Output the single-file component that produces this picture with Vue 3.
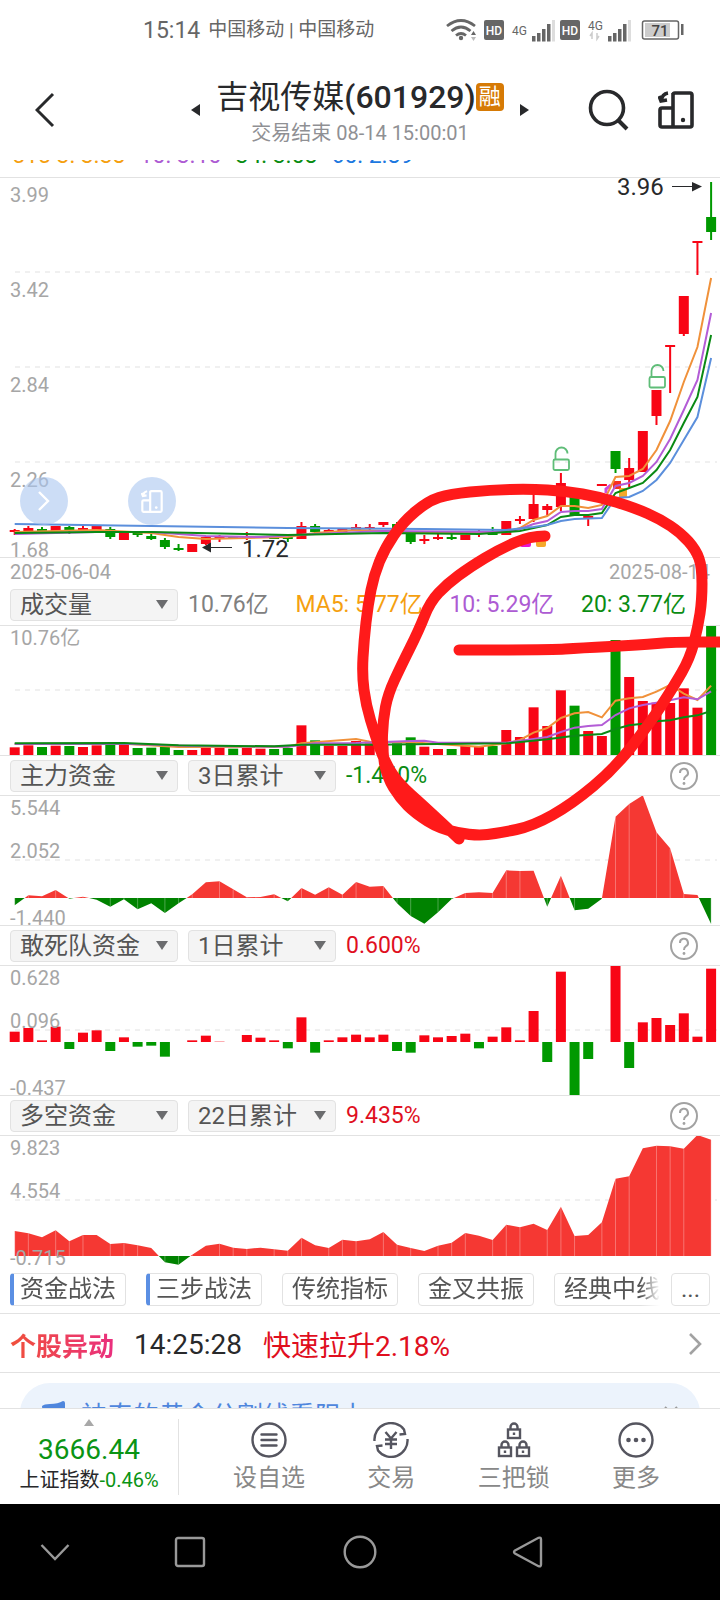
<template>
    <div class="stock-page">
        <div class="status-bar">
            <span class="clock">15:14</span>
            <span class="carrier">中国移动 | 中国移动</span>
            <svg class="status-icons" width="250" height="40" viewBox="440 10 250 40">
                <g fill="none" stroke="#666" stroke-width="2.8">
                    <path d="M447 26 Q461 15 475 26" />
                    <path d="M451.500 31 Q461 23 470.500 31" />
                    <path d="M456 35.500 Q461 31.500 466 35.500" />
                </g>
                <circle cx="461" cy="38" r="2.200" fill="#666" />
                <path d="M471 35 l2.500 -4 l2.500 4 z" fill="#666" />
                <path d="M471 37 l2.500 4 l2.500 -4 z" fill="#bbb" />
                <rect x="484" y="20" width="20" height="20" rx="2" fill="#666" />
                <text x="494" y="35" class="hd">HD</text>
                <text x="512" y="35" class="net">4G</text>
                <rect x="560" y="20" width="20" height="20" rx="2" fill="#666" />
                <text x="570" y="35" class="hd">HD</text>
                <text x="588" y="30" class="net">4G</text>
                <path d="M592 39 v-6 l-2 3 M597 33 v6 l2 -3" fill="none" stroke="#ccc" stroke-width="1.500" />
                <g v-for="x in [532, 608]" :key="x" fill="#666">
                    <rect :x="x" y="36" width="3.500" height="5.500" />
                    <rect :x="x + 5" y="33" width="3.500" height="8.500" />
                    <rect :x="x + 10" y="29" width="3.500" height="12.500" />
                    <rect :x="x + 15" y="24" width="3.500" height="17.500" />
                    <rect :x="x + 20" y="20" width="3" height="21.500" fill="#ddd" />
                </g>
                <rect x="642.500" y="21" width="36" height="18" rx="2" fill="#fff" stroke="#666" stroke-width="1.500" />
                <rect x="645" y="23" width="25" height="14" fill="#ccc" />
                <rect x="681" y="24" width="2.500" height="11" fill="#666" />
                <text x="660" y="35.500" class="level">71</text>
            </svg>
        </div>

        <header class="top-bar">
            <button class="plain back" aria-label="返回">
                <svg width="20" height="36" viewBox="0 0 20 36"><path d="M18 2 L2 18 L18 34" fill="none" stroke="#28292b" stroke-width="3" /></svg>
            </button>
            <div class="title-group">
                <button class="plain" aria-label="上一只">
                    <svg width="9" height="12" viewBox="0 0 9 12"><path d="M9 0 V12 L0 6 z" fill="#28292b" /></svg>
                </button>
                <div class="title-box">
                    <h1>吉视传媒<b>(601929)</b><span class="badge">融</span></h1>
                    <p>交易结束 08-14 15:00:01</p>
                </div>
                <button class="plain" aria-label="下一只">
                    <svg width="9" height="12" viewBox="0 0 9 12"><path d="M0 0 V12 L9 6 z" fill="#28292b" /></svg>
                </button>
            </div>
            <div class="actions">
                <button class="plain" aria-label="搜索">
                    <svg width="42" height="42" viewBox="0 0 42 42" fill="none" stroke="#28292b" stroke-width="3.600">
                        <circle cx="19" cy="19" r="16.500" /><path d="M30 31 L39 40" stroke-width="4" />
                    </svg>
                </button>
                <button class="plain" aria-label="横屏">
                    <svg width="36" height="38" viewBox="0 0 36 38" fill="none" stroke="#28292b" stroke-width="3.600">
                        <path :d="devicePath" /><circle cx="25" cy="29" r="2.200" fill="#28292b" stroke="none" />
                    </svg>
                </button>
            </div>
        </header>

        <div class="ma-strip">
            <span class="c-orange">515 3: 3.38</span>
            <span class="c-purple">10: 3.10</span>
            <span class="c-green">34: 3.08</span>
            <span class="c-blue">60: 2.89</span>
        </div>

        <section class="chart price-chart">
            <svg viewBox="0 178 720 379">
                <path class="grid" d="M15 272H717M15 367H717M15 462H717" />
                <text x="10" y="202" class="axis">3.99</text>
                <text x="10" y="297" class="axis">3.42</text>
                <text x="10" y="392" class="axis">2.84</text>
                <text x="10" y="487" class="axis">2.26</text>
                <text x="10" y="557" class="axis">1.68</text>
                <g v-for="(c, i) in candles" :key="i" :fill="color(i)">
                    <rect :x="cx(i) - 1" :y="c[0]" width="2" :height="c[3] - c[0]" />
                    <rect :x="cx(i) - 5" :y="c[1]" width="10" :height="c[2] - c[1]" />
                </g>
                <rect x="520" y="540" width="11" height="7" rx="2" fill="#e815d0" />
                <rect x="536" y="540" width="10" height="7" rx="2" fill="#f5a82a" />
                <path d="M606 493 V489 L611 485" fill="none" stroke="#cf4be0" stroke-width="3" />
                <rect x="613" y="481" width="8" height="8" fill="#f8301f" />
                <rect x="619" y="488" width="8" height="10" rx="2" fill="#f5a82a" />
                <polyline v-for="l in priceLines" :key="l.color" class="ma" :points="points(l.data, v => v)" :stroke="l.color" />
                <g fill="none" stroke="#5fbd78" stroke-width="1.800">
                    <g v-for="p in locks" :key="p" :transform="p">
                        <rect x="0" y="12" width="15.500" height="10.500" rx="1.500" />
                        <path d="M2 12 V6 A6 6 0 0 1 14 6" />
                    </g>
                </g>
                <text x="617" y="195" class="peak">3.96</text>
                <path d="M672 186.500H694" stroke="#28292b" />
                <path d="M692 182 V191.500 L702 186.500 z" fill="#28292b" />
                <text x="242" y="557" class="peak">1.72</text>
                <path d="M211 547.500H232" stroke="#28292b" />
                <path d="M211 542.500 V552.500 L202 547.500 z" fill="#28292b" />
            </svg>
            <div class="floaters">
                <button class="plain float-btn" aria-label="展开">
                    <svg width="14" height="22" viewBox="0 0 14 22"><path d="M2 2 L11 11 L2 20" fill="none" stroke="#fff" stroke-width="2.400" /></svg>
                </button>
                <button class="plain float-btn" aria-label="切换横屏">
                    <svg width="22" height="23" viewBox="0 0 36 38" fill="none" stroke="#fff" stroke-width="3.600">
                        <path :d="devicePath" /><circle cx="25" cy="29" r="2.200" fill="#fff" stroke="none" />
                    </svg>
                </button>
            </div>
        </section>

        <div class="dates">
            <span>2025-06-04</span>
            <span>2025-08-14</span>
        </div>

        <div class="panel-head first">
            <label class="picker wide"><select aria-label="成交量指标"><option>成交量</option></select></label>
            <div class="values">
                <span class="value c-grey">10.76亿</span>
                <span class="value c-orange">MA5: 5.77亿</span>
                <span class="value c-purple">10: 5.29亿</span>
                <span class="value c-green">20: 3.77亿</span>
            </div>
        </div>
        <section class="chart">
            <svg viewBox="0 626 720 129">
                <path class="grid" d="M15 690H717" />
                <text x="10" y="645" class="axis">10.76亿</text>
                <rect v-for="(v, i) in volumes" :key="i" :x="cx(i) - 5" :y="755 - v / 3" width="10" :height="v / 3" :fill="color(i)" />
                <polyline v-for="l in volumeLines" :key="l.color" class="ma" :points="points(l.data, v => 755 - v / 3)" :stroke="l.color" />
            </svg>
        </section>

        <template v-for="p in panels" :key="p.name">
            <div class="panel-head">
                <label class="picker wide"><select :aria-label="p.name + '指标'"><option>{{ p.name }}</option></select></label>
                <label class="picker"><select :aria-label="p.name + '周期'"><option>{{ p.period }}</option></select></label>
                <span class="value" :class="p.tone">{{ p.value }}</span>
                <button class="plain help" :aria-label="p.name + '说明'">
                    <svg width="28" height="28" viewBox="0 0 28 28" fill="none" stroke="#a2a2a2" stroke-width="2">
                        <circle cx="14" cy="14" r="13" />
                        <path d="M10 11 A4 4 0 1 1 16 14.200 Q14 15.500 14 18" /><circle cx="14" cy="21.500" r="1.400" fill="#a2a2a2" stroke="none" />
                    </svg>
                </button>
            </div>
            <section class="chart">
                <svg :viewBox="`0 ${p.top} 720 129`">
                    <path class="grid" :d="`M15 ${p.top + 64}H717`" />
                    <template v-if="p.kind === 'area'">
                        <clipPath :id="'up' + p.top"><rect x="0" :y="p.top" width="720" :height="p.zero - p.top" /></clipPath>
                        <clipPath :id="'down' + p.top"><rect x="0" :y="p.zero" width="720" height="60" /></clipPath>
                        <polygon :points="area(p)" fill="#f53833" :clip-path="`url(#up${p.top})`" />
                        <polygon :points="area(p)" fill="#008200" :clip-path="`url(#down${p.top})`" />
                        <template v-for="(v, i) in p.data" :key="i">
                            <path v-if="i % 4 !== 2" :d="`M${cx(i)} ${p.zero}V${p.zero - v / 3}`" stroke="#fff" stroke-opacity=".3" />
                        </template>
                    </template>
                    <template v-else>
                        <rect v-for="(v, i) in p.data" :key="i" :x="cx(i) - 5" :y="v > 0 ? p.zero - v / 3 : p.zero" width="10" :height="Math.abs(v) / 3" :fill="v > 0 ? '#f80515' : '#009900'" />
                    </template>
                    <text x="10" :y="p.top + 19" class="axis">{{ p.labels[0] }}</text>
                    <text x="10" :y="p.top + 62" class="axis">{{ p.labels[1] }}</text>
                    <text x="10" :y="p.top + 129" class="axis">{{ p.labels[2] }}</text>
                </svg>
            </section>
        </template>

        <div class="chips-row">
            <div class="chips">
                <button v-for="(c, i) in chips" :key="c" class="chip" :class="{ marked: i < 2 }">{{ c }}</button>
            </div>
            <button class="chip more">...</button>
        </div>

        <a class="news" href="#">
            <strong>个股异动</strong>
            <time>14:25:28</time>
            <span>快速拉升2.18%</span>
            <svg width="14" height="24" viewBox="0 0 14 24"><path d="M2 2 L12 12 L2 22" fill="none" stroke="#a2a2a2" stroke-width="2.600" /></svg>
        </a>

        <div class="promo-wrap">
            <div class="promo">
                <svg width="24" height="24" viewBox="0 0 24 24"><path d="M0 5 Q2 3 8 3 Q16 3 21 0 Q23 0 23 2 V20 L1 15 z" fill="#4f86dd" /></svg>
                <span>神奇的黄金分割线看阻力</span>
                <svg class="close" width="14" height="14" viewBox="0 0 14 14"><path d="M1 1 L13 13 M13 1 L1 13" stroke="#999" stroke-width="2" /></svg>
            </div>
        </div>

        <nav class="bottom-nav">
            <a class="index" href="#">
                <svg width="10" height="7" viewBox="0 0 10 7"><path d="M5 0 L10 7 H0 z" fill="#a8a8a8" /></svg>
                <span class="index-value">3666.44</span>
                <span class="index-name">上证指数<i>-0.46%</i></span>
            </a>
            <div class="tabs">
                <a href="#">
                    <svg viewBox="0 0 36 36"><circle cx="18" cy="18" r="16.500" /><path d="M10.500 12.500H25.500M10.500 18H25.500M10.500 23.500H25.500" stroke-linecap="round" /></svg>
                    设自选
                </a>
                <a href="#">
                    <svg viewBox="0 0 36 36">
                        <path d="M1.500 19 A16.500 16.500 0 0 1 31 7.500 L32 12 L26.500 12.500" />
                        <path d="M34.500 17 A16.500 16.500 0 0 1 5 28.500 L4 24 L9.500 23.500" />
                        <path d="M12.500 10 L18 16.500 L23.500 10 M18 16 V27 M12 17.500H24 M12 22H24" />
                    </svg>
                    交易
                </a>
                <a href="#">
                    <svg viewBox="0 0 36 36">
                        <g v-for="p in ['translate(12 1)', 'translate(3 19)', 'translate(21 19)']" :key="p" :transform="p">
                            <rect x="0" y="6.500" width="12" height="8.500" /><path d="M2.500 6.500 V4 A3.500 3.500 0 0 1 9.500 4 V6.500 M6 9.500 V12" />
                        </g>
                    </svg>
                    三把锁
                </a>
                <a href="#">
                    <svg viewBox="0 0 36 36">
                        <circle cx="18" cy="18" r="16.500" />
                        <g fill="#55555f" stroke="none"><circle cx="10.500" cy="18" r="2.300" /><circle cx="18" cy="18" r="2.300" /><circle cx="25.500" cy="18" r="2.300" /></g>
                    </svg>
                    更多
                </a>
            </div>
        </nav>

        <div class="system-bar">
            <button class="plain" aria-label="收起"><svg width="32" height="32" viewBox="0 0 32 32"><path d="M2.500 9 L16 23 L29.500 9" /></svg></button>
            <button class="plain" aria-label="最近任务"><svg width="32" height="32" viewBox="0 0 32 32"><rect x="2" y="2" width="28" height="28" rx="2" /></svg></button>
            <button class="plain" aria-label="主屏幕"><svg width="34" height="34" viewBox="0 0 34 34"><circle cx="17" cy="17" r="15.300" /></svg></button>
            <button class="plain" aria-label="后退"><svg width="32" height="32" viewBox="0 0 32 32"><path d="M3 14.500 L26.500 1.800 Q29 1 29 3.500 V28.500 Q29 31 26.500 30.200 L3 17.500 Q1 16 3 14.500 z" /></svg></button>
        </div>

        <svg class="marker" viewBox="0 0 720 1600">
            <path v-for="(s, i) in strokes" :key="i" :d="smooth(s)" />
        </svg>
    </div>
</template>

<script setup>
const devicePath = 'M15 4 Q15 2 17 2 H32 Q34 2 34 4 V34 Q34 36 32 36 H4 Q2 36 2 34 V19 Q2 17 4 17 H15 M15 2 V36 M10 2 Q4 3 3 10 M1 5 L3 10 L9 9'

const directions = 'RRGRGRRGRGGGGRRRGRRGGRGRRRRRGGRRGRRGRRRRRGRRGRRRRRRG'
const color = i => (directions[i] === 'R' ? '#f80515' : '#009900')

// horizontal centre of a trading day
const cx = i => 14.7 + i * 13.655

// high, body top, body bottom, low
const candles = [
    [529, 530, 532, 535], [526, 528, 532, 532], [527, 529, 531, 532], [526, 526, 531, 531],
    [526, 527, 531, 534], [526, 528, 530, 530], [525, 526, 530, 530], [527, 529, 537, 539],
    [533, 533, 540, 540], [533, 533, 535, 537], [534, 536, 539, 540], [538, 540, 547, 549],
    [544, 548, 550, 551], [544, 544, 552, 552], [537, 537, 544, 545], [535, 537, 539, 542],
    [536, 536, 538, 538], [532, 536, 538, 540], [536, 536, 538, 538], [537, 537, 539, 539],
    [537, 537, 539, 542], [522, 526, 539, 539], [524, 526, 532, 533], [529, 530, 532, 532],
    [529, 529, 532, 532], [524, 527, 530, 530], [524, 527, 528, 530], [522, 522, 525, 527],
    [522, 524, 529, 529], [532, 532, 542, 544], [535, 539, 541, 544], [534, 537, 539, 540],
    [534, 537, 539, 540], [535, 535, 540, 540], [530, 531, 533, 537], [527, 533, 535, 535],
    [521, 521, 535, 535], [516, 519, 521, 524], [494, 504, 519, 522], [504, 506, 510, 515],
    [473, 483, 507, 511], [497, 497, 516, 516], [514, 516, 518, 526], [484, 484, 486, 486],
    [451, 451, 469, 473], [458, 468, 480, 487], [431, 431, 472, 472], [390, 390, 416, 425],
    [345, 345, 347, 393], [296, 296, 334, 336], [241, 241, 243, 275], [182, 217, 232, 240]
]

// [day, position] pairs
const priceLines = [
    { color: '#f0913a', data: [[0, 532], [6, 530], [10, 533], [12, 537], [14, 539], [20, 537], [22, 533], [25, 530], [31, 533], [36, 532], [37, 528], [38, 520], [39, 516], [40, 506], [41, 506], [42, 508], [43, 505], [44, 477], [45, 476], [46, 469], [47, 450], [48, 421], [49, 382], [50, 347], [51, 278]] },
    { color: '#b35cd6', data: [[0, 534], [6, 532], [10, 532], [14, 536], [18, 537], [22, 534], [27, 531], [36, 532], [37, 529], [38, 524], [39, 521], [40, 512], [41, 511], [42, 511], [43, 509], [44, 486], [45, 483], [46, 476], [47, 462], [48, 439], [49, 410], [50, 380], [51, 313]] },
    { color: '#0a8a14', data: [[0, 533], [6, 532], [10, 532], [20, 535], [27, 533], [34, 534], [37, 531], [38, 528], [39, 525], [40, 517], [41, 515], [42, 515], [43, 513], [44, 493], [45, 488], [46, 483], [47, 470], [48, 450], [49, 423], [50, 397], [51, 335]] },
    { color: '#5b8fdc', data: [[0, 524], [10, 526], [20, 528], [30, 529], [36, 530], [38, 527], [39, 525], [40, 521], [41, 519], [43, 518], [44, 498], [45, 497], [46, 491], [47, 480], [48, 463], [49, 440], [50, 417], [51, 358]] }
]

const locks = ['translate(553.500 447.500)', 'translate(649.500 365)']

const volumes = [23, 29, 24, 28, 27, 24, 29, 37, 30, 21, 22, 25, 15, 15, 22, 21, 19, 21, 19, 18, 21, 89, 44, 28, 27, 42, 35, 30, 35, 53, 25, 18, 18, 28, 25, 27, 75, 54, 143, 87, 194, 148, 72, 57, 345, 234, 162, 157, 156, 200, 142, 390]

const volumeLines = [
    { color: '#f0913a', data: [[0, 33], [8, 34], [12, 24], [20, 25], [21, 35], [25, 48], [26, 40], [29, 38], [34, 25], [36, 35], [37, 45], [38, 67], [39, 81], [40, 111], [41, 125], [42, 129], [43, 113], [44, 163], [45, 170], [46, 174], [47, 190], [48, 210], [49, 184], [50, 165], [51, 208]] },
    { color: '#b35cd6', data: [[0, 33], [8, 34], [13, 27], [20, 25], [22, 35], [25, 36], [29, 42], [30, 43], [31, 37], [36, 37], [38, 48], [39, 54], [40, 69], [41, 82], [42, 87], [43, 90], [44, 120], [45, 140], [46, 150], [47, 157], [48, 164], [49, 173], [50, 167], [51, 191]] },
    { color: '#0a8a14', data: [[0, 35], [8, 36], [12, 29], [19, 26], [21, 31], [26, 31], [36, 35], [39, 47], [41, 58], [43, 63], [44, 78], [45, 89], [46, 94], [47, 101], [48, 104], [49, 113], [50, 119], [51, 132]] }
]

const panels = [
    {
        name: '主力资金', period: '3日累计', value: '-1.440%', tone: 'c-green', kind: 'area', top: 796, zero: 898,
        labels: ['5.544', '2.052', '-1.440'],
        data: [-22, 8, 5, 24, -2, 4, -5, -26, -4, -34, -16, -45, -16, 11, 47, 50, 26, 2, 3, 11, -10, 30, 10, 32, 10, 48, 34, 36, -16, -54, -77, -43, -3, 15, 17, 15, 83, 81, 82, -26, 67, -37, -32, -2, 244, 282, 308, 197, 149, 12, 9, -78]
    },
    {
        name: '敢死队资金', period: '1日累计', value: '0.600%', tone: 'c-red', kind: 'bar', top: 966, zero: 1042,
        labels: ['0.628', '0.096', '-0.437'],
        data: [31, 42, 5, 46, -21, 28, 35, -27, 14, -14, -11, -44, 0, 5, 19, 1, 0, 21, 13, 5, -19, 74, -32, 5, 14, 22, 14, 22, -27, -32, 20, 14, 18, 25, -19, 16, 44, 5, 93, -60, 211, -160, -51, 0, 229, -78, 59, 72, 51, 86, 16, 220]
    },
    {
        name: '多空资金', period: '22日累计', value: '9.435%', tone: 'c-red', kind: 'area', top: 1136, zero: 1256,
        labels: ['9.823', '4.554', '-0.715'],
        data: [75, 68, 56, 77, 44, 63, 63, 36, 39, 32, 24, -19, -26, 4, 31, 37, 25, 21, 25, 20, 16, 55, 32, 24, 49, 44, 50, 72, 34, 24, 15, 31, 40, 69, 61, 48, 94, 86, 97, 78, 148, 60, 63, 101, 232, 239, 323, 331, 329, 322, 363, 349]
    }
]

const chips = ['资金战法', '三步战法', '传统指标', '金叉共振', '经典中线']

// hand drawn pen strokes over the charts
const strokes = [
    [[545, 536], [530, 536], [500, 549], [470, 567], [447, 584], [430, 602], [419, 630], [401, 666], [388, 694], [383, 720], [382, 750], [387, 777], [400, 798], [415, 813], [440, 829], [475, 836], [500, 833], [533, 826], [572, 804], [615, 768], [650, 723], [674, 686], [690, 658], [698, 627], [702, 600], [702, 567], [696, 550], [681, 533], [660, 519], [635, 508], [600, 497], [565, 491], [530, 489], [490, 490], [450, 494], [428, 501], [403, 522], [385, 548], [374, 575], [368, 605], [364, 640], [362, 675], [366, 705], [375, 735], [384, 760], [397, 782], [425, 807], [459, 839]],
    [[459, 650], [550, 650], [580, 648], [640, 645], [674, 642], [724, 642]]
]

function smooth(pts) {
    let d = `M${pts[0]}`
    for (let i = 1; i < pts.length - 1; i++) {
        const [x, y] = pts[i]
        const [nx, ny] = pts[i + 1]
        d += ` Q${x} ${y} ${(x + nx) / 2} ${(y + ny) / 2}`
    }
    return `${d} L${pts[pts.length - 1]}`
}

function points(data, toY) {
    return data.map(([i, v]) => `${cx(i)},${toY(v)}`).join(' ')
}

function area(p) {
    const line = p.data.map((v, i) => `${cx(i)},${p.zero - v / 3}`).join(' ')
    return `${cx(0)},${p.zero} ${line} ${cx(p.data.length - 1)},${p.zero}`
}
</script>

<style>
body {
    margin: 0;
    background: #fff;
}
</style>

<style scoped>
.stock-page {
    position: relative;
    display: flex;
    flex-direction: column;
    min-height: 100vh;
    overflow: hidden;
    background: #fff;
    color: #28292b;
    font-family: Roboto, "Noto Sans CJK SC", sans-serif;
}
.stock-page a {
    color: inherit;
    text-decoration: none;
}
.plain {
    display: flex;
    align-items: center;
    justify-content: center;
    padding: 0;
    border: none;
    background: none;
}
.c-orange { color: #f5a010; }
.c-purple { color: #ad5bd3; }
.c-green { color: #0a8c12; }
.c-blue { color: #1c78e0; }
.c-grey { color: #808080; }
.c-red { color: #e00f1e; }

.status-bar {
    display: flex;
    align-items: center;
    height: 60px;
    padding: 0 30px 0 143px;
    color: #666;
}
.clock {
    margin-right: 8px;
    font-size: 23px;
}
.carrier {
    font-size: 19px;
    line-height: 24px;
}
.status-icons {
    margin-left: auto;
}
.hd {
    fill: #fff;
    font-size: 12px;
    font-weight: 500;
    text-anchor: middle;
}
.net {
    fill: #666;
    font-size: 12px;
}
.level {
    fill: #444;
    font-size: 15px;
    font-weight: 500;
    text-anchor: middle;
}

.top-bar {
    display: grid;
    grid-template-columns: 1fr 338px 1fr;
    height: 100px;
}
.back {
    justify-self: start;
    padding: 0 35px;
}
.title-group {
    display: flex;
    align-items: center;
    justify-content: space-between;
}
.title-box {
    display: flex;
    flex-direction: column;
    align-items: center;
}
.title-box h1 {
    display: flex;
    align-items: center;
    margin: 0;
    font-size: 32px;
    font-weight: 400;
    line-height: 44px;
    white-space: nowrap;
}
.title-box b {
    font-weight: 500;
}
.badge {
    padding: 0 3px;
    border-radius: 4px;
    background: #d67a05;
    color: #fff;
    font-size: 22px;
    line-height: 28px;
}
.title-box p {
    margin: 2px 0 0;
    color: #8f9094;
    font-size: 20px;
    line-height: 24px;
}
.actions {
    display: flex;
    align-items: center;
    justify-content: flex-end;
    gap: 28px;
    padding-right: 26px;
}

.ma-strip {
    display: flex;
    align-items: flex-end;
    gap: 14px;
    height: 17px;
    padding: 0 12px 9px;
    box-sizing: border-box;
    overflow: hidden;
    font-size: 23px;
    line-height: 24px;
    white-space: nowrap;
}

.chart {
    position: relative;
    border-top: 1px solid #e2e2e2;
}
.chart > svg {
    display: block;
    width: 100%;
}
.grid {
    fill: none;
    stroke: #f0f0f0;
    stroke-width: 2;
    stroke-dasharray: 5 5;
}
.axis {
    fill: #a6a6a6;
    font-size: 20px;
}
.peak {
    fill: #28292b;
    font-size: 24px;
}
.ma {
    fill: none;
    stroke-width: 2;
}
.floaters {
    position: absolute;
    bottom: 32px;
    left: 20px;
    display: flex;
    gap: 60px;
}
.float-btn {
    width: 48px;
    height: 48px;
    border-radius: 50%;
    background: rgba(170, 198, 240, 0.6);
}

.dates {
    display: flex;
    justify-content: space-between;
    padding: 1px 10px 0;
    border-top: 1px solid #e2e2e2;
    color: #a6a6a6;
    font-size: 20px;
    line-height: 26px;
}
.panel-head {
    display: flex;
    align-items: center;
    gap: 10px;
    height: 40px;
    padding: 0 22px 0 10px;
    box-sizing: border-box;
    border-top: 1px solid #e2e2e2;
}
.panel-head.first {
    border-top: none;
}
.values {
    display: flex;
    flex: 1;
    justify-content: space-between;
    padding-right: 12px;
}
.value {
    font-size: 23px;
    line-height: 30px;
    white-space: nowrap;
}
.picker {
    position: relative;
    width: 148px;
}
.picker.wide {
    width: 168px;
}
.picker::after {
    content: "";
    position: absolute;
    top: 11px;
    right: 10px;
    border: 6px solid transparent;
    border-top: 9px solid #6b6c6e;
    border-bottom: none;
    pointer-events: none;
}
.picker select {
    display: block;
    width: 100%;
    height: 32px;
    padding: 0 9px;
    box-sizing: border-box;
    appearance: none;
    border: 1px solid #e2e2e2;
    border-radius: 4px;
    background: #f4f4f4;
    color: #555;
    font-family: inherit;
    font-size: 24px;
    line-height: 30px;
}
.help {
    margin-left: auto;
}

.chips-row {
    display: flex;
    align-items: center;
    gap: 11px;
    height: 48px;
    padding: 0 10px;
}
.chips {
    display: flex;
    flex: 1;
    gap: 20px;
    min-width: 0;
    overflow: hidden;
    mask-image: linear-gradient(to right, #000 97%, transparent);
}
.chip {
    flex: none;
    height: 33px;
    padding: 0 9px;
    box-sizing: border-box;
    border: 1px solid #e2e2e2;
    border-radius: 4px;
    background: #fff;
    color: #555;
    font-family: inherit;
    font-size: 24px;
    line-height: 30px;
}
.chips .chip {
    width: 116px;
}
.chip.marked {
    padding-left: 6px;
    border-left: 4px solid #5b8fe3;
}

.news {
    display: flex;
    align-items: center;
    height: 59px;
    padding: 2px 18px 0 10px;
    box-sizing: border-box;
    border-top: 1px solid #e2e2e2;
    font-size: 28px;
}
.news strong {
    background: linear-gradient(to right, #f0503a, #ea2f7e);
    background-clip: text;
    color: transparent;
    font-size: 26px;
    font-weight: 700;
}
.news time {
    margin: 0 21px 0 20px;
}
.news span {
    color: #e00f1e;
}
.news svg {
    margin-left: auto;
}
.promo-wrap {
    height: 36px;
    padding: 10px 20px 0;
    box-sizing: border-box;
    border-top: 1px solid #e2e2e2;
    overflow: hidden;
}
.promo {
    display: flex;
    align-items: center;
    gap: 15px;
    height: 60px;
    padding: 0 22px;
    border-radius: 32px;
    background: #ecf3fc;
    color: #4f86dd;
    font-size: 26px;
}
.promo .close {
    margin-left: auto;
}

.bottom-nav {
    display: flex;
    align-items: center;
    height: 96px;
    box-sizing: border-box;
    border-top: 1px solid #e2e2e2;
}
.index {
    display: flex;
    flex-direction: column;
    align-items: center;
    width: 179px;
    height: 76px;
    box-sizing: border-box;
    border-right: 1px solid #e2e2e2;
}
.index-value {
    margin-top: 6px;
    color: #0a9414;
    font-size: 28px;
    line-height: 36px;
}
.index-name {
    font-size: 20px;
    line-height: 24px;
}
.index-name i {
    color: #0a9414;
    font-style: normal;
}
.tabs {
    display: flex;
    flex: 1;
    justify-content: space-between;
    padding: 4px 60px 0 54px;
}
.tabs a {
    display: flex;
    flex-direction: column;
    align-items: center;
    gap: 2px;
    color: #888;
    font-size: 24px;
    line-height: 36px;
}
.tabs svg {
    width: 36px;
    height: 36px;
    fill: none;
    stroke: #55555f;
    stroke-width: 2.4;
}
.system-bar {
    display: grid;
    grid-template-columns: 110fr 160fr 180fr 156fr 114fr;
    flex: 1;
    min-height: 96px;
    background: #000;
}
.system-bar svg {
    fill: none;
    stroke: #999;
    stroke-width: 2.4;
}
.marker {
    position: absolute;
    top: 0;
    left: 0;
    width: 100%;
    fill: none;
    stroke: #ff1a1a;
    stroke-width: 11;
    stroke-linecap: round;
    stroke-linejoin: round;
    pointer-events: none;
}
</style>
